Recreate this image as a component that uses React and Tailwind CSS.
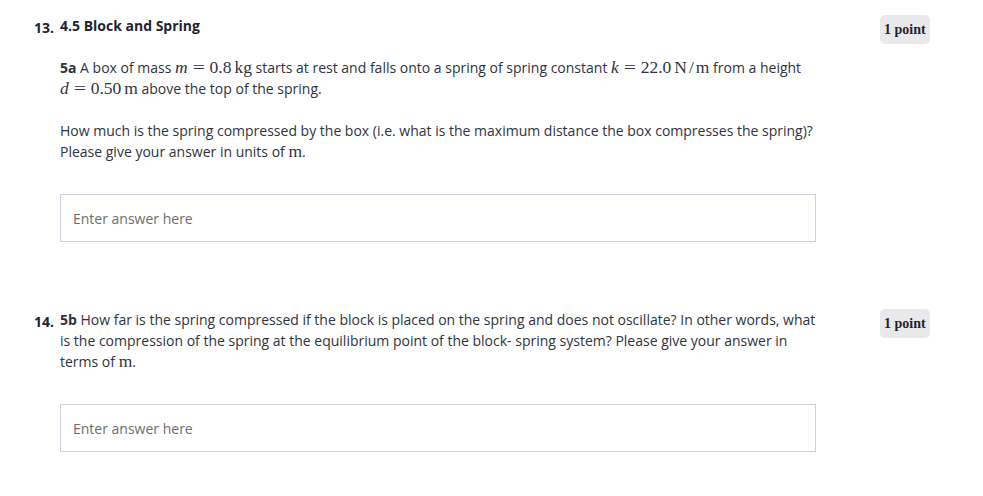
import React from "react";

// inline math, roughly KaTeX sized: 1.21em of the body text
const M = ({ children }) => (
  <span className="whitespace-nowrap font-['Liberation_Serif','Times_New_Roman',serif] text-[17.5px] leading-none">{children}</span>
);
const I = ({ children }) => <span className="italic">{children}</span>;
const Eq = () => <span className="mx-[6px] inline-block scale-x-125">=</span>;
const Thin = () => <span className="inline-block w-[3px]" />;

const Badge = () => (
  <span className="inline-block rounded-[5px] bg-[#e9e9eb] px-[4px] py-[4px] text-[14px] font-bold leading-[21px] text-[#1f2433] font-['Liberation_Serif','Times_New_Roman',serif]">
    1 point
  </span>
);

const AnswerBox = () => (
  <input
    type="text"
    placeholder="Enter answer here"
    className="block h-[48px] w-[756px] border border-[#cfd1dc] bg-white px-[12px] text-[14px] text-[#333] outline-none placeholder:text-[#6e6e6e]"
  />
);

const Question = ({ num, children, box }) => (
  <div className="flex">
    <div className="w-[26px] shrink-0 pt-[2px] text-[14px] font-bold leading-[21px] text-[#1f2433]">{num}</div>
    <div className="w-[760px] shrink-0">
      {children}
      {box}
    </div>
    <div className="ml-[60px]">
      <Badge />
    </div>
  </div>
);

export default function App() {
  return (
    <div className="min-h-[496px] w-[983px] bg-white pl-[34px] pt-[15px] font-['Open_Sans','Noto_Sans',sans-serif] text-[14px] leading-[21px] text-[#2e3440]">
      <Question
        num="13."
        box={
          <div className="mt-[32px]">
            <AnswerBox />
          </div>
        }
      >
        <div className="font-bold text-[#1f2433]">4.5 Block and Spring</div>
        <p className="mt-[21px]">
          <b>5a</b> A box of mass{" "}
          <M>
            <I>m</I>
            <Eq />
            0.8
            <Thin />
            kg
          </M>{" "}
          starts at rest and falls onto a spring of spring constant{" "}
          <M>
            <I>k</I>
            <Eq />
            22.0
            <Thin />
            N<span className="px-[2px]">/</span>m
          </M>{" "}
          from a height{" "}
          <M>
            <I>d</I>
            <Eq />
            0.50
            <Thin />
            m
          </M>{" "}
          above the top of the spring.
        </p>
        <p className="mt-[21px]">
          How much is the spring compressed by the box (i.e. what is the maximum distance the box compresses the spring)?
          Please give your answer in units of <M>m</M>.
        </p>
      </Question>

      <div className="mt-[67px]">
        <Question
          num="14."
          box={
            <div className="mt-[32px]">
              <AnswerBox />
            </div>
          }
        >
          <p>
            <b>5b</b> How far is the spring compressed if the block is placed on the spring and does not oscillate? In other
            words, what is the compression of the spring at the equilibrium point of the block- spring system? Please give
            your answer in terms of <M>m</M>.
          </p>
        </Question>
      </div>
    </div>
  );
}
